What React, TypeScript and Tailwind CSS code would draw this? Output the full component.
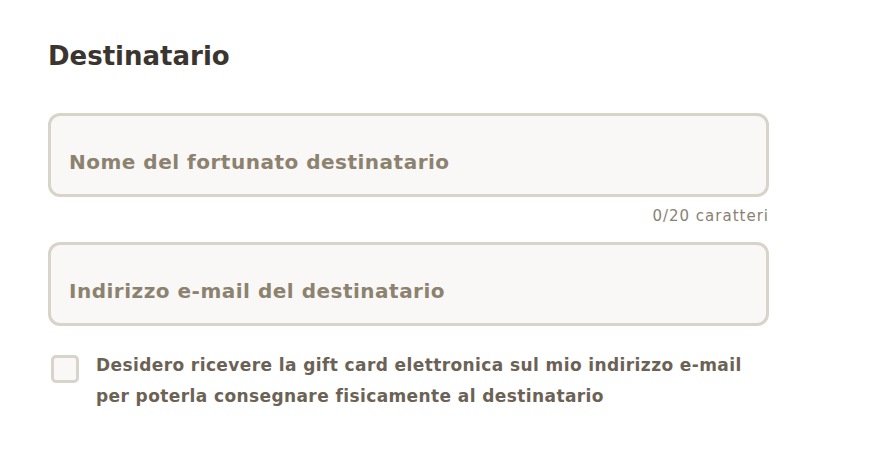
import { useState } from 'react';

export default function App() {
  const [name, setName] = useState('');
  const [email, setEmail] = useState('');
  const [physical, setPhysical] = useState(false);

  return (
    <div className="w-full min-h-screen bg-white font-['DejaVu_Sans',sans-serif]">
      <section className="w-[721px] ml-12 pt-[36px]">
        <h2 className="text-[26px] font-bold text-[#3a362f] leading-[40px]">Destinatario</h2>

        <div className="mt-[37px]">
          <input
            value={name}
            maxLength={20}
            onChange={(e) => setName(e.target.value)}
            placeholder="Nome del fortunato destinatario"
            className="w-full h-[84px] rounded-[12px] border-[3px] border-[#d8d4ca] bg-[#faf8f6] px-[18px] pt-[14px] text-[20px] tracking-[0.5px] font-bold text-[#3a362f] placeholder:text-[#8c8270] outline-none"
          />
          <div className="text-right text-[15px] tracking-[1px] text-[#8a8173] leading-[20px] mt-[9px]">
            {name.length}/20 caratteri
          </div>
        </div>

        <input
          value={email}
          onChange={(e) => setEmail(e.target.value)}
          placeholder="Indirizzo e-mail del destinatario"
          className="mt-[16px] w-full h-[84px] rounded-[12px] border-[3px] border-[#d8d4ca] bg-[#faf8f6] px-[18px] pt-[14px] text-[20px] tracking-[0.5px] font-bold text-[#3a362f] placeholder:text-[#8c8270] outline-none"
        />

        <label className="mt-[24px] flex items-start gap-[17px] cursor-pointer">
          <input
            type="checkbox"
            checked={physical}
            onChange={(e) => setPhysical(e.target.checked)}
            className="appearance-none mt-[5px] ml-[3px] shrink-0 w-[28px] h-[28px] rounded-[5px] border-[3px] border-[#d8d4ca] bg-[#faf8f6] checked:bg-[#6b6255]"
          />
          <span className="text-[17px] tracking-[0.4px] font-bold text-[#6b6255] leading-[31px]">
            Desidero ricevere la gift card elettronica sul mio indirizzo e-mail
            <br />
            per poterla consegnare fisicamente al destinatario
          </span>
        </label>
      </section>
    </div>
  );
}
